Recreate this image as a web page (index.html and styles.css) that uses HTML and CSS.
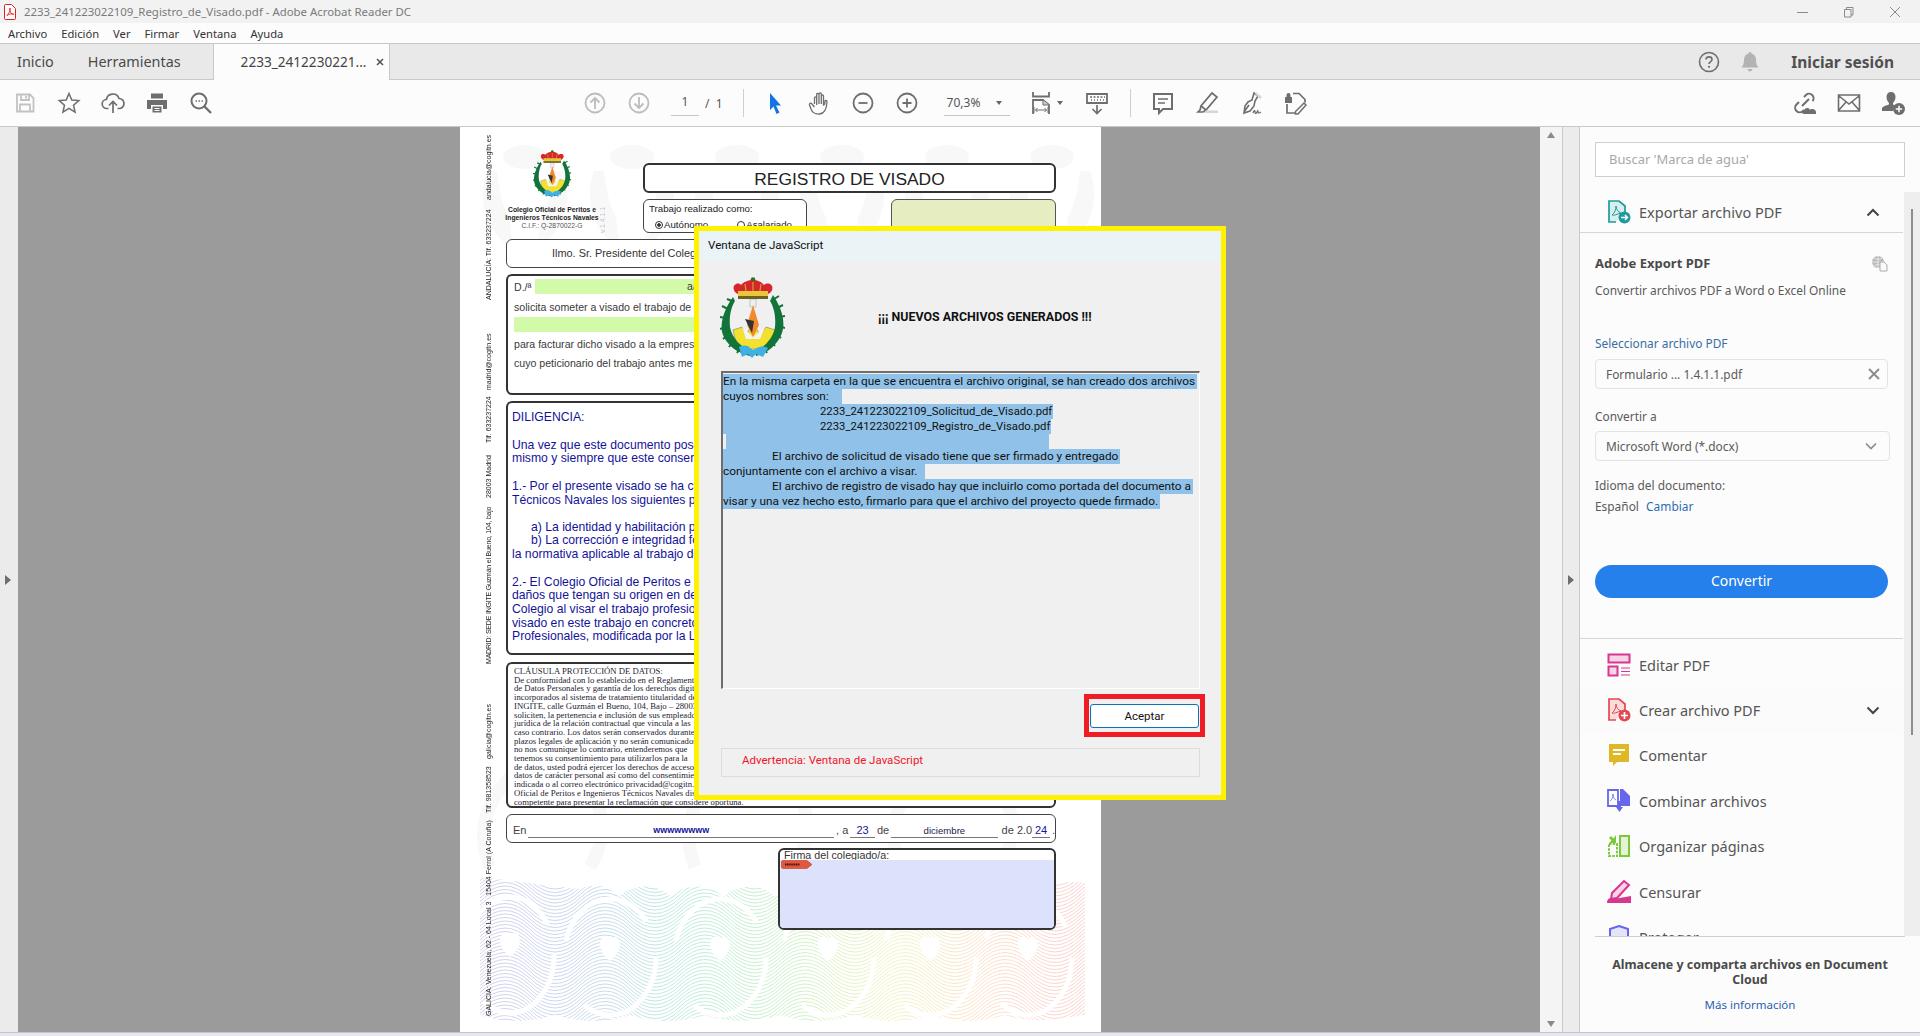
FILE: index.html
```html
<!DOCTYPE html>
<html lang="es">
<head>
    <meta charset="UTF-8">
    <title>2233_241223022109_Registro_de_Visado.pdf - Adobe Acrobat Reader DC</title>
    <link rel="stylesheet" href="styles.css">
</head>
<body>
    <svg class="defs" width="0" height="0">
        <defs>
            <symbol id="crest" viewBox="0 0 65 82">
                <path d="M13 53l9-3 4 8 7-12 7 12 6-8 9 3-3 13-12 6H26l-10-6z" fill="#f4e12f" stroke="#666" stroke-width=".5"/>
                <path d="M22 50l11 10 12-10-5 12H26z" fill="#f3f3f3"/>
                <path d="M13 20C4 32-1 48 3 58c4 10 14 18 27 21l1-4c-9-5-19-13-21-25-1-10 1-20 5-26z" fill="#12743a"/>
                <path d="M53 18c8 12 13 26 9 38-4 11-14 20-26 23l-1-4c9-5 18-13 20-25 1-10-1-20-5-26z" fill="#12743a"/>
                <path d="M12 24L7 22M8 32l-6-3M5 41l-5-1M5 50l-5 2M8 58l-5 4M13 65l-4 5M20 71l-3 5M54 22l5-3M57 31l6-3M59 40l6-1M59 49l6 2M56 57l5 4M51 64l4 5M44 71l3 5" stroke="#12743a" stroke-width="2"/>
                <path d="M30 22h6v8h-6z" fill="#efefef" stroke="#999" stroke-width=".5"/>
                <path d="M33 28l6 20-6 12-6-12z" fill="#f08a2c"/>
                <path d="M25 42l9 2-2 12z" fill="#333"/>
                <path d="M19 70c4-2 9-2 11 1l3 2 4-2c3-2 8-2 11 0l-5 9-7-3-4 4-4-4-6 3z" fill="#3fb0e6"/>
                <path d="M18 17c-5-2-6-8-2-10 3-1 4 0 5 1 2-3 8-5 12-5s9 2 11 5c1-1 3-2 6-1 4 2 3 8-2 10z" fill="#d7252c"/>
                <path d="M18 14h30v5H18z" fill="#e9c73a"/>
                <path d="M18 19h30v3H18z" fill="#6d6220"/>
                <circle cx="33" cy="2.500" r="2.300" fill="#3b6d2a"/>
                <path d="M25 7l1 7M33 5v9M41 7l-1 7" stroke="#c9a62a" stroke-width="1.200"/>
            </symbol>
            <g id="pale-crest">
                <ellipse cx="0" cy="8" rx="22" ry="12"/>
                <path d="M-38 22c-10 28-2 60 26 78l-4-32c-8-14-10-30-12-46zM38 22c10 28 2 60-26 78l4-32c8-14 10-30 12-46z"/>
            </g>
        </defs>
    </svg>

    <div class="titlebar">
        <svg class="pdf-icon" viewBox="0 0 12 16"><path d="M1.500.5h6l4 4v10a1 1 0 0 1-1 1h-9a1 1 0 0 1-1-1v-13a1 1 0 0 1 1-1z" fill="#fff" stroke="#e0201c"/><path d="M6 4c-.6 2 .2 4 1.200 5.400 1 .8 2 .8 2.600.8M6 4c.6 2-.6 5-3 7.500M3 11.500c2-1.500 4-2 6.800-1.300" fill="none" stroke="#e0201c" stroke-width=".9"/></svg>
        <span class="title-text">2233_241223022109_Registro_de_Visado.pdf - Adobe Acrobat Reader DC</span>
        <div class="win-btns">
            <svg viewBox="0 0 12 12"><path d="M0 6.500h11" stroke="#8a8a8a"/></svg>
            <svg viewBox="0 0 12 12"><path d="M1.500 3.500h6.500v7.500h-6.500zM3.500 3.500v-2h6.500v7.500h-2" fill="none" stroke="#8a8a8a"/></svg>
            <svg viewBox="0 0 12 12"><path d="M1 1l10 10M11 1L1 11" stroke="#8a8a8a"/></svg>
        </div>
    </div>

    <div class="menubar">
        <span>Archivo</span>
        <span>Edición</span>
        <span>Ver</span>
        <span>Firmar</span>
        <span>Ventana</span>
        <span>Ayuda</span>
    </div>

    <div class="tabbar">
        <span class="tab-link tab-inicio">Inicio</span>
        <span class="tab-link tab-tools">Herramientas</span>
        <div class="tab-doc">
            <span>2233_2412230221...</span>
            <svg class="tab-x" viewBox="0 0 8 8"><path d="M1 1l6 6M7 1L1 7" stroke="#555" stroke-width="1.600"/></svg>
        </div>
        <div class="tab-right">
            <svg class="help" viewBox="0 0 22 22"><circle cx="11" cy="11" r="9.500" fill="none" stroke="#6e6e6e" stroke-width="1.600"/><path d="M8 8.500c.2-1.800 1.500-2.600 3-2.600 1.700 0 3 1 3 2.600 0 2.400-3 2.300-3 4.500" fill="none" stroke="#6e6e6e" stroke-width="1.600"/><circle cx="11" cy="15.800" r="1.100" fill="#6e6e6e"/></svg>
            <svg class="bell" viewBox="0 0 18 22"><path d="M9 1c1 0 1.500.7 1.500 1.500 3 .8 4.500 3.200 4.500 6.500 0 4 1 5.500 2.500 7.500h-17C2 14.500 3 13 3 9c0-3.300 1.500-5.700 4.500-6.500C7.500 1.700 8 1 9 1zM6.500 18h5c-.3 1.600-1.300 2.500-2.500 2.500S6.800 19.600 6.500 18z" fill="#b3b3b3"/></svg>
            <span class="signin">Iniciar sesión</span>
        </div>
    </div>

    <div class="toolbar">
        <div class="tool-group">
            <svg class="ti" viewBox="0 0 24 24"><path d="M4 3.500h13l3.500 3.500v13.500H4zM8 3.500v5.500h8V3.500M13 5v2.500M7 20.500v-7h10v7" fill="none" stroke="#c2c2c2" stroke-width="1.800"/></svg>
            <svg class="ti" viewBox="0 0 24 24"><path d="M12 2.500l2.800 6.500 7 .6-5.300 4.600 1.600 6.900-6.100-3.700-6.100 3.700 1.600-6.900-5.300-4.600 7-.6z" fill="none" stroke="#6e6e6e" stroke-width="1.500"/></svg>
            <svg class="ti" viewBox="0 0 24 24"><path d="M7.500 17.500H6a4.500 4.500 0 0 1-.6-9A6.500 6.500 0 0 1 18 7.500a5 5 0 0 1 0 10h-1.500" fill="none" stroke="#6e6e6e" stroke-width="1.700"/><path d="M12 22v-11M8 14.500l4-4 4 4" fill="none" stroke="#6e6e6e" stroke-width="1.700"/></svg>
            <svg class="ti" viewBox="0 0 24 24"><path d="M6 2.500h12v5H6zM2 9h20v9h-4v-4H6v4H2zM7.500 15.500h9v6h-9z" fill="#6e6e6e"/><path d="M9.500 17.500h5M9.500 19.500h5" stroke="#fff"/></svg>
            <svg class="ti" viewBox="0 0 24 24"><circle cx="10" cy="10" r="7.500" fill="none" stroke="#6e6e6e" stroke-width="2"/><path d="M15.500 15.500l6.500 6.500" stroke="#6e6e6e" stroke-width="2.400"/><path d="M6.500 10h1.500M9.500 10h1.500M12.500 10h1.500" stroke="#6e6e6e" stroke-width="1.400"/></svg>
        </div>
        <div class="tool-group nav-group">
            <svg class="ti" viewBox="0 0 24 24"><circle cx="12" cy="12" r="9.500" fill="none" stroke="#bcbcbc" stroke-width="1.800"/><path d="M12 18V7M7.500 11.500L12 7l4.500 4.500" fill="none" stroke="#bcbcbc" stroke-width="1.800"/></svg>
            <svg class="ti" viewBox="0 0 24 24"><circle cx="12" cy="12" r="9.500" fill="none" stroke="#bcbcbc" stroke-width="1.800"/><path d="M12 6v11M7.500 12.500L12 17l4.500-4.500" fill="none" stroke="#bcbcbc" stroke-width="1.800"/></svg>
            <span class="page-input">1</span>
            <span class="page-total">/ &nbsp;1</span>
        </div>
        <span class="tool-sep sep-a"></span>
        <div class="tool-group">
            <svg class="ti" viewBox="0 0 24 24"><path d="M7 2l11 12.500h-5l3.500 7-3 1.500-3-7.500L7 19z" fill="#1473e6"/></svg>
            <svg class="ti" viewBox="0 0 24 24"><path d="M7.500 13V7c0-1.600 2.200-1.600 2.200 0V3.500c0-1.600 2.300-1.600 2.300 0V3c0-1.500 2.300-1.500 2.300 0v2c0-1.500 2.200-1.500 2.200 0v9c1 0 1.500-2 1.500-4 0-1 2-1 2 .5-.2 5-1 12-7.500 12.500-5 .3-7-1-8.500-5L2.500 14c-.5-1.500 1.500-2.500 2.500-1l2.500 3M9.700 7v7M12 3.500V13M14.300 4v9M16.500 5v8" fill="none" stroke="#6e6e6e" stroke-width="1.300"/></svg>
            <svg class="ti" viewBox="0 0 24 24"><circle cx="12" cy="12" r="9.500" fill="none" stroke="#6e6e6e" stroke-width="1.800"/><path d="M7.500 12h9" stroke="#6e6e6e" stroke-width="1.800"/></svg>
            <svg class="ti" viewBox="0 0 24 24"><circle cx="12" cy="12" r="9.500" fill="none" stroke="#6e6e6e" stroke-width="1.800"/><path d="M7.500 12h9M12 7.500v9" stroke="#6e6e6e" stroke-width="1.800"/></svg>
        </div>
        <div class="zoom-box"><span>70,3%</span><i class="caret"></i></div>
        <svg class="ti ti-fit" viewBox="0 0 24 24"><path d="M4 1v4.500h16V1" fill="none" stroke="#6e6e6e" stroke-width="1.800"/><path d="M4 23V9h10l6 5v9" fill="none" stroke="#6e6e6e" stroke-width="1.800"/><path d="M14 9v5h6" fill="#ccc" stroke="#6e6e6e"/><path d="M6.500 19h11M6.500 19l2-2M6.500 19l2 2M17.500 19l-2-2M17.500 19l-2 2M5 16v6M19 16v6" fill="none" stroke="#6e6e6e"/></svg>
        <i class="caret caret-fit"></i>
        <svg class="ti ti-read" viewBox="0 0 24 24"><path d="M2 3h20v9H2z" fill="none" stroke="#6e6e6e" stroke-width="1.800"/><path d="M5 6h2M8.500 6h2M12 6h2M15.500 6h2M19 6h1M6 9h1M9 9h1M12 9h1M15 9h1M18 9h1" stroke="#6e6e6e" stroke-width="1.500"/><path d="M12 14v8.500M7.500 18l4.500 4.500 4.500-4.500" fill="none" stroke="#6e6e6e" stroke-width="1.700"/></svg>
        <span class="tool-sep sep-b"></span>
        <div class="tool-group">
            <svg class="ti" viewBox="0 0 24 24"><path d="M3 3h18v15h-9l-4 4v-4H3z" fill="none" stroke="#6e6e6e" stroke-width="2"/><path d="M7 8h10M7 12h7" stroke="#6e6e6e" stroke-width="1.500"/></svg>
            <svg class="ti" viewBox="0 0 24 24"><path d="M17 2l5 4-11 13-5-4zM6 15l-1 4-2 2h5l3-2" fill="none" stroke="#6e6e6e" stroke-width="1.700"/><path d="M9 22h14v-2.500H11z" fill="#d6d6d6"/></svg>
            <svg class="ti" viewBox="0 0 24 24"><path d="M15 2l4 3-3 5-1 5-4 5-6 2 1-7 3-4 4-2zM5 21l5-7" fill="none" stroke="#6e6e6e" stroke-width="1.600"/><path d="M17 1l6 5-2 2-5-5z" fill="#d6d6d6"/><path d="M14 22c1-3 2-3 2-1s1 2 2 0 1-2 1 0 1 1 3 0" fill="none" stroke="#6e6e6e" stroke-width="1.300"/></svg>
            <svg class="ti" viewBox="0 0 24 24"><path d="M10 2.500h6l6 6v3M4 13v9h8" fill="none" stroke="#6e6e6e" stroke-width="1.700"/><path d="M2 6h7v6H2zM3.500 6V4a2 2 0 0 1 4 0v2" fill="#6e6e6e"/><path d="M21 12l2 2-8 9h-2.500v-2.500z" fill="none" stroke="#6e6e6e" stroke-width="1.500"/></svg>
        </div>
        <div class="tool-group tool-end">
            <svg class="ti" viewBox="0 0 24 24"><path d="M9 15l7-7M11 6l2-2a4.500 4.500 0 0 1 6.500 6.200M6 11l-2.500 2.500A4.500 4.500 0 0 0 10 20l1-1" fill="none" stroke="#6e6e6e" stroke-width="2"/><path d="M11 23c-2.500 0-2.500-3.500 0-3.500 .5-3 5-3.500 6-.5 1-2 6-1 6 2v2z" fill="#6e6e6e"/></svg>
            <svg class="ti" viewBox="0 0 24 24"><path d="M1.500 4h21v16h-21zM2 5l10 8 10-8M2 19l7-8M22 19l-7-8" fill="none" stroke="#6e6e6e" stroke-width="1.600"/></svg>
            <svg class="ti" viewBox="0 0 24 24"><path d="M10 1c3 0 4.500 2 4.500 5s-1.500 5-2.500 6v1.500c1 .5 2 1 2.500 1.200A7 7 0 0 0 12 20H1v-2.500c0-2.500 5-3 7-4V12C7 11 5.500 9 5.500 6S7 1 10 1z" fill="#6e6e6e"/><circle cx="18" cy="18" r="6" fill="#6e6e6e"/><path d="M14.800 18h6.400M18 14.800v6.400" stroke="#fff" stroke-width="1.500"/></svg>
        </div>
    </div>

    <div class="main">
        <div class="left-strip"><i class="arrow-right"></i></div>

        <div class="canvas">
            <div class="page">
                <svg class="watermark" viewBox="0 0 641 905">
                    <g fill="#f8f8f8">
                        <use href="#pale-crest" x="65" y="22"/>
                        <use href="#pale-crest" x="172" y="22"/>
                        <use href="#pale-crest" x="277" y="22"/>
                        <use href="#pale-crest" x="382" y="22"/>
                        <use href="#pale-crest" x="487" y="22"/>
                        <use href="#pale-crest" x="592" y="22"/>
                    </g>
                    <g fill="none" stroke="#f8f8f8" stroke-width="13">
                        <path d="M30 740c-20-50 10-90 50-110M130 740c30-50 0-90-40-110M235 740c-20-50 10-90 50-110M335 740c30-50 0-90-40-110M440 740c-20-50 10-90 50-110M540 740c30-50 0-90-40-110"/>
                    </g>
                </svg>
                <svg class="guilloche" viewBox="0 0 605 150">
                    <defs>
                        <path id="wave" d="M-100 0q25 -24 50 0t50 0t50 0t50 0" fill="none" stroke="#fff" stroke-width=".6"/>
                        <pattern id="waves" width="100" height="14" patternUnits="userSpaceOnUse">
                            <use href="#wave" y="-14"/><use href="#wave" y="-10.500"/><use href="#wave" y="-7"/><use href="#wave" y="-3.500"/>
                            <use href="#wave"/><use href="#wave" y="3.500"/><use href="#wave" y="7"/><use href="#wave" y="10.500"/>
                            <use href="#wave" y="14"/><use href="#wave" y="17.500"/><use href="#wave" y="21"/><use href="#wave" y="24.500"/>
                            <use href="#wave" y="28"/>
                        </pattern>
                        <linearGradient id="rainbow">
                            <stop offset="0" stop-color="#b4b2e2"/>
                            <stop offset=".15" stop-color="#a6bce2"/>
                            <stop offset=".33" stop-color="#92dccc"/>
                            <stop offset=".5" stop-color="#a6e6a4"/>
                            <stop offset=".68" stop-color="#ebec9c"/>
                            <stop offset=".82" stop-color="#f8d0a2"/>
                            <stop offset="1" stop-color="#f9aeae"/>
                        </linearGradient>
                        <mask id="wave-mask">
                            <rect width="605" height="150" fill="url(#waves)"/>
                            <path d="M0 0h605v6c-25-4-40 4-50 14-12-14-40-14-52 0-12-14-40-14-52 0-12-14-40-14-52 0-12-14-40-14-52 0-12-14-40-14-52 0-12-14-40-14-52 0-12-14-40-14-52 0-12-14-40-14-52 0-10-12-25-14-41-8z" fill="#000"/>
                            <path d="M30 80c-16-12-10-30 0-22 10-8 16 10 0 22zM130 84c-16-12-10-30 0-22 10-8 16 10 0 22zM240 84c-16-12-10-30 0-22 10-8 16 10 0 22zM348 84c-16-12-10-30 0-22 10-8 16 10 0 22zM450 84c-16-12-10-30 0-22 10-8 16 10 0 22zM548 84c-16-12-10-30 0-22 10-8 16 10 0 22z" fill="#000"/>
                            <g fill="none" stroke="#000" stroke-width="5" stroke-dasharray="110 70">
                                <ellipse cx="30" cy="78" rx="44" ry="58"/>
                                <ellipse cx="130" cy="80" rx="46" ry="58"/>
                                <ellipse cx="240" cy="80" rx="46" ry="58"/>
                                <ellipse cx="348" cy="80" rx="46" ry="58"/>
                                <ellipse cx="450" cy="80" rx="46" ry="58"/>
                                <ellipse cx="548" cy="80" rx="44" ry="58"/>
                            </g>
                            <path d="M0 150V138c25 8 50 8 75 0 25 8 50 8 75 0 25 8 50 8 75 0 25 8 50 8 75 0 25 8 50 8 75 0 25 8 50 8 75 0 25 8 50 8 75 0 25 8 40 6 80 0v12z" fill="#000"/>
                        </mask>
                    </defs>
                    <rect width="605" height="150" fill="url(#rainbow)" mask="url(#wave-mask)"/>
                </svg>

                <div class="side-text">
                    <span>GALICIA: Venezuela, 62 - 64 Local 3 &nbsp; 15404 Ferrol (A Coruña)</span>
                    <span>Tlf. 981358523</span>
                    <span>galicia@cogitn.es</span>
                    <span>MADRID: SEDE INGITE Guzmán el Bueno, 104, bajo</span>
                    <span>28003 Madrid</span>
                    <span>Tlf. 633237224</span>
                    <span>madrid@cogitn.es</span>
                    <span>ANDALUCÍA: Tlf. 633237224</span>
                    <span>andalucia@cogitn.es</span>
                </div>

                <div class="sheet">
                    <div class="doc-head">
                        <div class="colegio">
                            <svg class="crest-small"><use href="#crest"/></svg>
                            <b>Colegio Oficial de Peritos e</b>
                            <b>Ingenieros Técnicos Navales</b>
                            <span>C.I.F.: Q-2870022-G</span>
                        </div>
                        <span class="version">v.1.4.1.1</span>
                        <div class="head-right">
                            <div class="doc-title">REGISTRO DE VISADO</div>
                            <div class="head-row">
                                <div class="work-box">
                                    <div>Trabajo realizado como:</div>
                                    <div class="radios"><span><i class="radio on"></i>Autónomo</span><span><i class="radio"></i>Asalariado</span></div>
                                </div>
                                <div class="stamp-box"></div>
                            </div>
                        </div>
                    </div>

                    <div class="box addr-box">Ilmo. Sr. Presidente del Colegio</div>

                    <div class="box thick form-box">
                        <div class="form-row first"><span>D./ª</span><span class="field name-field">aa</span></div>
                        <div class="form-line">solicita someter a visado el trabajo de</div>
                        <div class="field work-field"></div>
                        <div class="form-line gap-a">para facturar dicho visado a la empresa</div>
                        <div class="form-line gap-b">cuyo peticionario del trabajo antes me</div>
                    </div>

                    <div class="box thick dilig-box">
                        <p class="dilig-title">DILIGENCIA:</p>
                        <p>Una vez que este documento posee<br>mismo y siempre que este conserve</p>
                        <p>1.- Por el presente visado se ha comprobado<br>Técnicos Navales los siguientes puntos</p>
                        <p class="tight"><span class="indent">a) La identidad y habilitación profesional</span><br><span class="indent">b) La corrección e integridad formal</span><br>la normativa aplicable al trabajo de</p>
                        <p>2.- El Colegio Oficial de Peritos e Ingenieros<br>daños que tengan su origen en defectos<br>Colegio al visar el trabajo profesional<br>visado en este trabajo en concreto<br>Profesionales, modificada por la Ley</p>
                    </div>

                    <div class="box thick data-box">
                        <div>CLÁUSULA PROTECCIÓN DE DATOS:</div>
                        <div>De conformidad con lo establecido en el Reglamento</div>
                        <div>de Datos Personales y garantía de los derechos digitales</div>
                        <div>incorporados al sistema de tratamiento titularidad de</div>
                        <div>INGITE, calle Guzmán el Bueno, 104, Bajo – 28003</div>
                        <div>soliciten, la pertenencia e inclusión de sus empleados</div>
                        <div>jurídica de la relación contractual que vincula a las</div>
                        <div>caso contrario. Los datos serán conservados durante</div>
                        <div>plazos legales de aplicación y no serán comunicados</div>
                        <div>no nos comunique lo contrario, entenderemos que</div>
                        <div>tenemos su consentimiento para utilizarlos para la</div>
                        <div>de datos, usted podrá ejercer los derechos de acceso</div>
                        <div>datos de carácter personal así como del consentimiento</div>
                        <div>indicada o al correo electrónico privacidad@cogitn.es</div>
                        <div>Oficial de Peritos e Ingenieros Técnicos Navales dispone</div>
                        <div>competente para presentar la reclamación que considere oportuna.</div>
                    </div>

                    <div class="box place-box">
                        <span>En</span>
                        <span class="blank b-city"><em class="wide">wwwwwwww</em></span>
                        <span>, a</span>
                        <span class="blank b-day"><em>23</em></span>
                        <span>de</span>
                        <span class="blank b-month"><b>diciembre</b></span>
                        <span class="year">de 2.0</span>
                        <span class="blank b-year"><em>24</em></span>
                        <span>.</span>
                    </div>

                    <div class="sign-box">
                        <div class="sign-label">Firma del colegiado/a:</div>
                        <div class="sign-area">
                            <svg class="sign-tag" viewBox="0 0 32 9"><path d="M1.500.5H26l5 4-5 4H1.500L.5 7.500v-6z" fill="#e2583e" stroke="#c13a28" stroke-width=".6"/><path d="M4 4.500h15" stroke="#4a1208" stroke-width="2" stroke-dasharray="1.500 .6"/></svg>
                        </div>
                    </div>
                </div>
            </div>
        </div>

        <div class="page-scroll">
            <i class="scroll-up"></i>
            <i class="scroll-down"></i>
        </div>

        <div class="panel-strip"><i class="arrow-right"></i></div>

        <div class="panel">
            <div class="search-box">Buscar 'Marca de agua'</div>
            <div class="tools-wrap">
                <div class="tools">
                    <div class="tool-row export-row">
                        <svg class="tool-icon" viewBox="0 0 24 24"><path d="M9 22H2V1h10l6 5v6" fill="#d8eeee" stroke="#1f9a9d" stroke-width="1.700"/><path d="M5 15c3-2 4-6 4-9 0 3 2 6 5 7M5 15c2 1 5-1 9-2" fill="none" stroke="#1f9a9d"/><circle cx="17.500" cy="17.500" r="6" fill="#1f9a9d"/><path d="M14 17.500h6M18 15l2.500 2.500L18 20" fill="none" stroke="#fff" stroke-width="1.500"/></svg>
                        <span>Exportar archivo PDF</span>
                        <svg class="chev" viewBox="0 0 14 9"><path d="M1.500 7.500L7 2l5.500 5.500" fill="none" stroke="#444" stroke-width="2"/></svg>
                    </div>
                    <div class="export-body">
                        <div class="export-head">
                            <b>Adobe Export PDF</b>
                            <svg class="globe" viewBox="0 0 17 17"><circle cx="7" cy="7" r="6" fill="#bbb"/><path d="M1 7h12M7 1v12M3 3c3 2 5 2 8 0M3 11c3-2 5-2 8 0" fill="none" stroke="#eee" stroke-width=".8"/><path d="M9 7h4l3 3v6H9z" fill="#fafafa" stroke="#aaa"/></svg>
                        </div>
                        <p class="export-desc">Convertir archivos PDF a Word o Excel Online</p>
                        <label class="select-label">Seleccionar archivo PDF</label>
                        <div class="field-box file-box">
                            <span>Formulario ... 1.4.1.1.pdf</span>
                            <svg class="clear" viewBox="0 0 12 12"><path d="M1 1l10 10M11 1L1 11" stroke="#8a8a8a" stroke-width="1.800"/></svg>
                        </div>
                        <label class="plain-label">Convertir a</label>
                        <div class="field-box format-box">
                            <span>Microsoft Word (*.docx)</span>
                            <svg class="clear" viewBox="0 0 12 8"><path d="M1 1.500l5 5 5-5" fill="none" stroke="#8a8a8a" stroke-width="1.600"/></svg>
                        </div>
                        <div class="lang-label">Idioma del documento:</div>
                        <div class="lang-value">Español &nbsp;<a>Cambiar</a></div>
                        <div class="convert-btn">Convertir</div>
                    </div>
                    <div class="tool-row first-tool">
                        <svg class="tool-icon" viewBox="0 0 24 24"><path d="M1.500 1.500h21v8h-21z" fill="#f6d3e6" stroke="#d83790" stroke-width="2"/><path d="M1.500 13.500h9v9h-9z" fill="#f6d3e6" stroke="#d83790" stroke-width="2"/><path d="M14 15h9M14 18.500h9M14 22h9" stroke="#d83790" stroke-width="1.200"/></svg>
                        <span>Editar PDF</span>
                    </div>
                    <div class="tool-row tinted">
                        <svg class="tool-icon" viewBox="0 0 24 24"><path d="M9 22H2V1h10l6 5v6" fill="#fbdcdc" stroke="#e34850" stroke-width="1.700"/><path d="M5 15c3-2 4-6 4-9 0 3 2 6 5 7M5 15c2 1 5-1 9-2" fill="none" stroke="#e34850"/><circle cx="17.500" cy="17.500" r="6" fill="#e34850"/><path d="M14 17.500h7M17.500 14v7" stroke="#fff" stroke-width="1.700"/></svg>
                        <span>Crear archivo PDF</span>
                        <svg class="chev" viewBox="0 0 14 9"><path d="M1.500 1.500L7 7l5.500-5.500" fill="none" stroke="#444" stroke-width="2"/></svg>
                    </div>
                    <div class="tool-row">
                        <svg class="tool-icon" viewBox="0 0 24 24"><path d="M2 1h20v18H10l-4 4v-4H2z" fill="#dfb825"/><path d="M6 7h12M6 11h8" stroke="#fff" stroke-width="2"/></svg>
                        <span>Comentar</span>
                    </div>
                    <div class="tool-row">
                        <svg class="tool-icon" viewBox="0 0 24 24"><path d="M1 1h10v16H1z" fill="#fff" stroke="#6767ec" stroke-width="1.800"/><path d="M13 0l3 0 7 7v10H13z" fill="#6767ec"/><path d="M3 12c2-1 3-4 3-7 0 3 1 5 3 6" fill="none" stroke="#6767ec" stroke-width=".8"/><path d="M9 18h2v-6h3v6h2l-3.500 5z" fill="#6767ec"/></svg>
                        <span>Combinar archivos</span>
                    </div>
                    <div class="tool-row">
                        <svg class="tool-icon" viewBox="0 0 24 24"><path d="M13 2h9v20h-9z" fill="#e2f3d6" stroke="#7dc73d" stroke-width="2"/><path d="M2 10h8v12H2z" fill="none" stroke="#7dc73d" stroke-width="2" stroke-dasharray="2.500 1.200"/><path d="M9 1v8H2l2.500-2.500L2 4l2-2 2.500 2.500z" fill="#7dc73d"/></svg>
                        <span>Organizar páginas</span>
                    </div>
                    <div class="tool-row">
                        <svg class="tool-icon" viewBox="0 0 24 24"><path d="M17 1l5 4L10 18l-6 1 1-6z" fill="#f6d3e6" stroke="#d83790" stroke-width="2"/><path d="M0 23c0-3 1-4 3-5l4 1 17-3v7z" fill="#d83790"/></svg>
                        <span>Censurar</span>
                    </div>
                    <div class="tool-row">
                        <svg class="tool-icon" viewBox="0 0 24 24"><path d="M12 1l9 3v9c0 5-4 8-9 10-5-2-9-5-9-10V4z" fill="#e4e4fb" stroke="#6767ec" stroke-width="2"/></svg>
                        <span>Proteger</span>
                    </div>
                </div>
                <div class="tools-scroll"><i></i></div>
            </div>
            <div class="cloud-box">
                <b>Almacene y comparta archivos en Document Cloud</b>
                <a>Más información</a>
            </div>
        </div>
    </div>
    <div class="statusline"></div>

    <div class="js-dialog">
        <div class="dlg-title">Ventana de JavaScript</div>
        <div class="dlg-body">
            <div class="dlg-head">
                <svg class="crest-big"><use href="#crest"/></svg>
                <b>¡¡¡ NUEVOS ARCHIVOS GENERADOS !!!</b>
            </div>
            <div class="dlg-text">
                <span class="sel">En la misma carpeta en la que se encuentra el archivo original, se han creado dos archivos</span>
                <span class="sel">cuyos nombres son: &nbsp; &nbsp;</span>
                <span class="sel file-line">2233_241223022109_Solicitud_de_Visado.pdf</span>
                <span class="sel file-line">2233_241223022109_Registro_de_Visado.pdf</span>
                <span class="sel empty-line">&nbsp;</span>
                <span class="sel tab-line">El archivo de solicitud de visado tiene que ser firmado y entregado</span>
                <span class="sel">conjuntamente con el archivo a visar. &nbsp;</span>
                <span class="sel tab-line">El archivo de registro de visado hay que incluirlo como portada del documento a</span>
                <span class="sel">visar y una vez hecho esto, firmarlo para que el archivo del proyecto quede firmado.</span>
            </div>
            <div class="dlg-actions">
                <div class="ok-frame"><button class="ok-btn">Aceptar</button></div>
            </div>
            <div class="dlg-warning">Advertencia: Ventana de JavaScript</div>
        </div>
    </div>
</body>
</html>
```

FILE: styles.css
```css
* {
    box-sizing: border-box;
}
html, body {
    margin: 0;
    height: 100%;
}
body {
    width: 1920px;
    height: 1036px;
    overflow: hidden;
    display: flex;
    flex-direction: column;
    position: relative;
    font-family: "Noto Sans", sans-serif;
    color: #4b4b4b;
    background: #fff;
}
.defs {
    position: absolute;
}
svg {
    display: block;
}

/* window chrome */
.titlebar {
    height: 23px;
    background: #f2f2f2;
    display: flex;
    align-items: center;
    padding-left: 4px;
}
.pdf-icon {
    width: 12px;
    height: 16px;
    margin-right: 8px;
}
.title-text {
    font-size: 11.4px;
    color: #7a7a7a;
}
.win-btns {
    margin-left: auto;
    display: flex;
    gap: 34px;
    padding-right: 19px;
}
.win-btns svg {
    width: 12px;
    height: 12px;
}
.menubar {
    height: 21px;
    background: #fcfcfc;
    border-bottom: 1px solid #c9c9c9;
    display: flex;
    align-items: center;
    gap: 14px;
    padding-left: 8px;
    font-size: 11.2px;
    color: #333;
}
.tabbar {
    height: 36px;
    background: #e9e9e9;
    border-bottom: 1px solid #c9c9c9;
    display: flex;
    align-items: center;
    font-size: 14.4px;
    color: #4a4a4a;
}
.tab-inicio {
    margin-left: 17px;
}
.tab-tools {
    margin-left: 34px;
}
.tab-doc {
    height: 36px;
    width: 177px;
    margin-left: 32px;
    background: #fcfcfc;
    border-left: 1px solid #c9c9c9;
    border-right: 1px solid #c9c9c9;
    display: flex;
    align-items: center;
    padding-left: 27px;
    font-size: 13.6px;
    color: #444;
}
.tab-x {
    width: 8px;
    height: 8px;
    margin-left: 10px;
}
.tab-right {
    margin-left: auto;
    display: flex;
    align-items: center;
    padding-right: 26px;
}
.help {
    width: 22px;
    height: 22px;
}
.bell {
    width: 18px;
    height: 22px;
    margin-left: 21px;
}
.signin {
    margin-left: 32px;
    font-weight: 700;
    font-size: 15.5px;
    color: #505050;
}
.toolbar {
    height: 47px;
    background: #fcfcfc;
    border-bottom: 1px solid #c9c9c9;
    display: flex;
    align-items: center;
    padding-left: 13px;
}
.tool-group {
    display: flex;
    align-items: center;
    gap: 20px;
}
.ti {
    width: 24px;
    height: 24px;
    flex: none;
}
.nav-group {
    margin-left: 370px;
}
.page-input {
    width: 28px;
    height: 26px;
    margin-left: 0;
    border-bottom: 1px solid #c6c6c6;
    font-size: 12px;
    text-align: center;
    line-height: 24px;
    color: #555;
}
.page-total {
    margin-left: -14px;
    font-size: 12px;
    color: #555;
}
.tool-sep {
    width: 1px;
    height: 28px;
    background: #cfcfcf;
}
.sep-a {
    margin-left: 20px;
    margin-right: 19px;
}
.sep-b {
    margin-left: 21px;
    margin-right: 20px;
}
.zoom-box {
    width: 66px;
    height: 26px;
    margin-left: 25px;
    border-bottom: 1px solid #c6c6c6;
    display: flex;
    align-items: center;
    justify-content: space-between;
    padding: 0 8px 0 3px;
    font-size: 12px;
    color: #555;
}
.caret {
    width: 0;
    height: 0;
    border-left: 3.5px solid transparent;
    border-right: 3.5px solid transparent;
    border-top: 4px solid #666;
}
.ti-fit {
    margin-left: 19px;
}
.caret-fit {
    margin-left: 4px;
}
.ti-read {
    margin-left: 22px;
}
.tool-end {
    margin-left: auto;
    padding-right: 15px;
}

/* main area */
.main {
    height: 905px;
    display: flex;
}
.left-strip {
    width: 18px;
    background: #ebebeb;
    display: flex;
    align-items: center;
    justify-content: center;
    padding-right: 2px;
}
.arrow-right {
    width: 0;
    height: 0;
    border-top: 5px solid transparent;
    border-bottom: 5px solid transparent;
    border-left: 6px solid #6e6e6e;
}
.canvas {
    width: 1522px;
    background: #9b9b9b;
    display: flex;
    justify-content: center;
    padding-left: 3px;
}
.page {
    width: 641px;
    height: 905px;
    background: #fff;
    position: relative;
    overflow: hidden;
    display: flex;
    padding: 15px 0 0 23px;
    font-family: "Liberation Sans", Arial, sans-serif;
    color: #333;
}
.watermark {
    position: absolute;
    left: 0;
    top: 0;
    width: 641px;
    height: 905px;
}
.guilloche {
    position: absolute;
    left: 20px;
    top: 750px;
    width: 605px;
    height: 150px;
}
.side-text {
    position: relative;
    width: 12px;
    height: 878px;
    flex: none;
    writing-mode: vertical-rl;
    transform: rotate(180deg);
    display: flex;
    flex-direction: row;
    padding-top: 4px;
    font-size: 7px;
    line-height: 12px;
    color: #222;
    white-space: nowrap;
}
.side-text span:nth-child(2) {
    margin-top: 7px;
}
.side-text span:nth-child(3) {
    margin-top: 8px;
}
.side-text span:nth-child(4) {
    margin-top: 40px;
    letter-spacing: -.2px;
}
.side-text span:nth-child(5) {
    margin-top: 8px;
}
.side-text span:nth-child(6) {
    margin-top: 12px;
}
.side-text span:nth-child(7) {
    margin-top: 7px;
}
.side-text span:nth-child(8) {
    margin-top: 33px;
}
.side-text span:nth-child(9) {
    margin-top: 10px;
}
.sheet {
    position: relative;
    width: 550px;
    margin: 8px 0 0 11px;
}
.doc-head {
    display: flex;
    height: 83px;
}
.colegio {
    width: 92px;
    flex: none;
    margin-left: 0;
    display: flex;
    flex-direction: column;
    align-items: center;
    font-size: 6.8px;
    line-height: 8px;
    white-space: nowrap;
    color: #222;
}
.colegio span {
    color: #555;
}
.crest-small {
    width: 38px;
    height: 48px;
    margin-bottom: 8px;
}
.version {
    width: 45px;
    flex: none;
    margin-top: 60px;
    writing-mode: vertical-rl;
    transform: rotate(180deg);
    font-size: 7px;
    color: #c4c4c4;
    text-align: left;
    height: 23px;
    line-height: 10px;
}
.head-right {
    width: 413px;
    padding-top: 13px;
}
.doc-title {
    height: 30px;
    border: 2px solid #333;
    border-radius: 6px;
    background: #fff;
    text-align: center;
    font-size: 17.4px;
    line-height: 28px;
    color: #222;
}
.head-row {
    display: flex;
    margin-top: 6px;
}
.work-box {
    width: 164px;
    height: 34px;
    border: 1px solid #444;
    border-radius: 6px;
    background: #fff;
    padding: 2px 5px;
    font-size: 9.7px;
    line-height: 13px;
    color: #222;
}
.radios {
    display: flex;
    gap: 29px;
    padding-left: 6px;
    margin-top: 3px;
}
.radio {
    display: inline-block;
    width: 8px;
    height: 8px;
    border: 1px solid #333;
    border-radius: 50%;
    margin-right: 1px;
    vertical-align: -1px;
}
.radio.on {
    background: radial-gradient(circle, #333 0 1.5px, #fff 2px);
}
.stamp-box {
    width: 165px;
    height: 34px;
    margin-left: 84px;
    border: 1px solid #555;
    border-radius: 6px;
    background: #e6edc1;
}
.box {
    background: #fff;
    border: 1px solid #444;
    border-radius: 6px;
    margin-top: 6px;
    position: relative;
    overflow: hidden;
    white-space: nowrap;
}
.thick {
    border: 2px solid #333;
}
.addr-box {
    height: 29px;
    padding-left: 45px;
    font-size: 10.9px;
    line-height: 27px;
    color: #333;
}
.form-box {
    height: 121px;
    padding: 3px 6px 0;
    font-size: 10.6px;
    color: #3a3a3a;
}
.form-row {
    display: flex;
    align-items: center;
    height: 15px;
}
.first span:first-child {
    width: 21px;
    flex: none;
}
.field {
    background: #d2faa8;
    height: 15px;
    display: block;
}
.name-field {
    flex: 1;
    padding-left: 152px;
    line-height: 15px;
}
.form-line {
    margin-top: 7px;
    line-height: 13px;
}
.work-field {
    margin-top: 3px;
}
.gap-a {
    margin-top: 6px;
}
.gap-b {
    margin-top: 6px;
}
.dilig-box {
    height: 254px;
    margin-top: 6px;
    padding: 8px 4px 0;
    font-size: 12.2px;
    line-height: 13.7px;
    color: #13139a;
}
.dilig-box p {
    margin: 14px 0 0;
}
.dilig-box .dilig-title {
    margin: 0 0 14px;
}
.dilig-box .tight {
    margin-top: 13px;
}
.indent {
    padding-left: 19px;
}
.data-box {
    height: 146px;
    margin-top: 7px;
    padding: 3px 6px 0;
    font-family: "Liberation Serif", "Times New Roman", serif;
    font-size: 8.7px;
    line-height: 8.7px;
    color: #1d1d33;
}
.place-box {
    height: 29px;
    display: flex;
    align-items: center;
    padding: 3px 0 0 6px;
    font-size: 11px;
    color: #444;
}
.blank {
    height: 15px;
    border-bottom: 1px solid #777;
    display: flex;
    justify-content: center;
    align-items: flex-end;
    line-height: 13px;
}
.blank em {
    font-style: normal;
    color: #16169a;
}
.blank .wide {
    font-weight: 700;
    font-size: 9px;
}
.blank b {
    font-weight: 400;
    font-size: 9.6px;
    color: #1c1c50;
}
.b-city {
    width: 310px;
    margin: 0 2px;
}
.b-day {
    width: 25px;
    margin: 0 2px;
}
.b-month {
    width: 108px;
    margin: 0 4px 0 2px;
}
.b-year {
    width: 18px;
    margin: 0 2px 0 0;
}
.sign-box {
    width: 278px;
    height: 82px;
    margin: 5px 0 0 272px;
    border: 2px solid #333;
    border-radius: 6px;
    overflow: hidden;
    background: #fff;
    display: flex;
    flex-direction: column;
}
.sign-label {
    height: 10px;
    padding-left: 4px;
    font-size: 10.7px;
    line-height: 11px;
    color: #333;
    white-space: nowrap;
}
.sign-area {
    flex: 1;
    background: #dce2fb;
    padding: 0 0 0 1px;
}
.sign-tag {
    width: 32px;
    height: 9px;
}

/* right side */
.page-scroll {
    width: 22px;
    background: #f4f4f4;
    display: flex;
    flex-direction: column;
    align-items: center;
    justify-content: space-between;
    padding: 5px 0;
}
.scroll-up {
    border-left: 4.5px solid transparent;
    border-right: 4.5px solid transparent;
    border-bottom: 6px solid #8a8a8a;
}
.scroll-down {
    border-left: 4.5px solid transparent;
    border-right: 4.5px solid transparent;
    border-top: 6px solid #8a8a8a;
}
.panel-strip {
    width: 18px;
    background: #ececec;
    border-left: 1px solid #c9c9c9;
    border-right: 1px solid #c9c9c9;
    display: flex;
    align-items: center;
    justify-content: center;
}
.panel {
    width: 340px;
    background: #fcfcfc;
    display: flex;
    flex-direction: column;
    font-size: 11.9px;
    color: #5a5a5a;
}
.search-box {
    height: 35px;
    margin: 15px 15px 0 15px;
    border: 1px solid #cfcfcf;
    background: #fff;
    padding-left: 13px;
    line-height: 33px;
    font-size: 12.9px;
    color: #a8a8a8;
}
.tools-wrap {
    height: 744px;
    margin-top: 15px;
    display: flex;
    overflow: hidden;
    position: relative;
}
.tools {
    width: 323px;
    flex: none;
}
.tools-scroll {
    flex: 1;
    background: #eeeeee;
    margin-left: 1px;
    padding: 17px 0 0 7px;
}
.tools-scroll i {
    display: block;
    width: 2px;
    height: 526px;
    background: #8d8d8d;
}
.tool-row {
    height: 45.4px;
    display: flex;
    align-items: center;
    padding-left: 27px;
    font-size: 14.5px;
    color: #555;
    white-space: nowrap;
}
.tool-icon {
    width: 24px;
    height: 24px;
    margin-right: 8px;
    flex: none;
}
.chev {
    width: 14px;
    height: 9px;
    margin-left: auto;
    margin-right: 23px;
}
.export-row {
    height: 41px;
    border-bottom: 1px solid #d6d6d6;
}
.export-body {
    height: 406px;
    border-bottom: 1px solid #d6d6d6;
    padding: 0 15px;
    display: flex;
    flex-direction: column;
    position: relative;
}
.export-head {
    display: flex;
    align-items: center;
    justify-content: space-between;
    margin-top: 20px;
    height: 20px;
    padding-right: 0;
    font-size: 13px;
}
.export-head b {
    color: #4a4a4a;
}
.globe {
    width: 17px;
    height: 17px;
}
.export-desc {
    margin: 9px 0 0;
    line-height: 16px;
}
.select-label {
    margin-top: 37px;
    line-height: 16px;
    color: #3a6ea5;
}
.field-box {
    height: 30px;
    border: 1px solid #e3e3e3;
    border-radius: 4px;
    background: #fcfcfc;
    display: flex;
    align-items: center;
    justify-content: space-between;
    padding: 0 7px 0 10px;
    width: 293px;
}
.file-box {
    margin-top: 8px;
}
.clear {
    width: 12px;
}
.plain-label {
    margin-top: 19px;
    line-height: 16px;
}
.format-box {
    margin-top: 7px;
    width: 295px;
    padding-right: 12px;
}
.lang-label {
    margin-top: 16px;
    line-height: 16px;
}
.lang-value {
    margin-top: 5px;
    line-height: 16px;
}
.lang-value a {
    color: #2a6db5;
    margin-left: 1px;
}
.convert-btn {
    width: 293px;
    height: 33px;
    margin-top: 51px;
    border-radius: 17px;
    background: #2680eb;
    color: #fff;
    font-size: 14px;
    line-height: 32px;
    text-align: center;
}
.first-tool {
    margin-top: 3px;
}
.tinted {
    background: #fbfbfb;
    margin: 0;
}
.cloud-box {
    flex: 1;
    margin-left: 15px;
    margin-right: 15px;
    border-top: 1px solid #cfcfcf;
    text-align: center;
    padding-top: 20px;
    font-size: 12.4px;
    line-height: 15px;
    color: #4a4a4a;
}
.cloud-box b {
    display: block;
    padding: 0 5px;
}
.cloud-box a {
    display: block;
    margin-top: 10px;
    font-size: 11.5px;
    color: #2a5fb5;
}
.statusline {
    flex: 1;
    border-top: 1px solid #c4c4cc;
    background: #e6e6ee;
}

/* javascript dialog */
.js-dialog {
    position: absolute;
    left: 694px;
    top: 226px;
    width: 532px;
    height: 574px;
    border: 5px solid #fff200;
    background: #f0f0f0;
    font-family: Roboto, "Noto Sans", sans-serif;
    color: #111;
    display: flex;
    flex-direction: column;
}
.dlg-title {
    height: 30px;
    background: #eaf3f6;
    padding-left: 9px;
    font-size: 11.6px;
    line-height: 28px;
}
.dlg-body {
    flex: 1;
    padding: 0 21px 0 22px;
    display: flex;
    flex-direction: column;
}
.dlg-head {
    height: 110px;
    display: flex;
    align-items: flex-start;
    font-size: 12.4px;
    padding-top: 16px;
}
.crest-big {
    width: 65px;
    height: 82px;
    margin-left: -1px;
}
.dlg-head b {
    margin: 32px 0 0 93px;
}
.dlg-text {
    height: 318px;
    border-top: 2px solid #6e6e6e;
    border-left: 2px solid #6e6e6e;
    border-right: 1px solid #fff;
    border-bottom: 1px solid #fff;
    padding: 1px 0 0;
    font-size: 11.82px;
    line-height: 15.05px;
}
.sel {
    display: block;
    width: fit-content;
    height: 15.05px;
    background: #90c1e8;
    white-space: nowrap;
    padding-right: 2px;
}
.file-line {
    padding-left: 97px;
    padding-right: 1px;
    font-size: 11.3px;
}
.empty-line {
    margin-left: 3px;
    width: 323px;
}
.tab-line {
    padding-left: 49px;
}
.dlg-actions {
    height: 59px;
    display: flex;
    justify-content: flex-end;
    align-items: flex-start;
    padding-top: 5px;
    margin-right: -5px;
}
.ok-frame {
    width: 121px;
    height: 43px;
    border: 5px solid #ee1c25;
    padding: 5px 0 0 1px;
}
.ok-btn {
    display: block;
    width: 109px;
    height: 24px;
    background: #fff;
    border: 1px solid #0a72c2;
    border-radius: 3px;
    font-family: inherit;
    font-size: 11.5px;
    color: #111;
    padding: 0;
}
.dlg-warning {
    height: 29px;
    border: 1px solid #dcdcdc;
    padding-left: 20px;
    line-height: 22px;
    font-size: 11.5px;
    color: #f0142d;
}
```
